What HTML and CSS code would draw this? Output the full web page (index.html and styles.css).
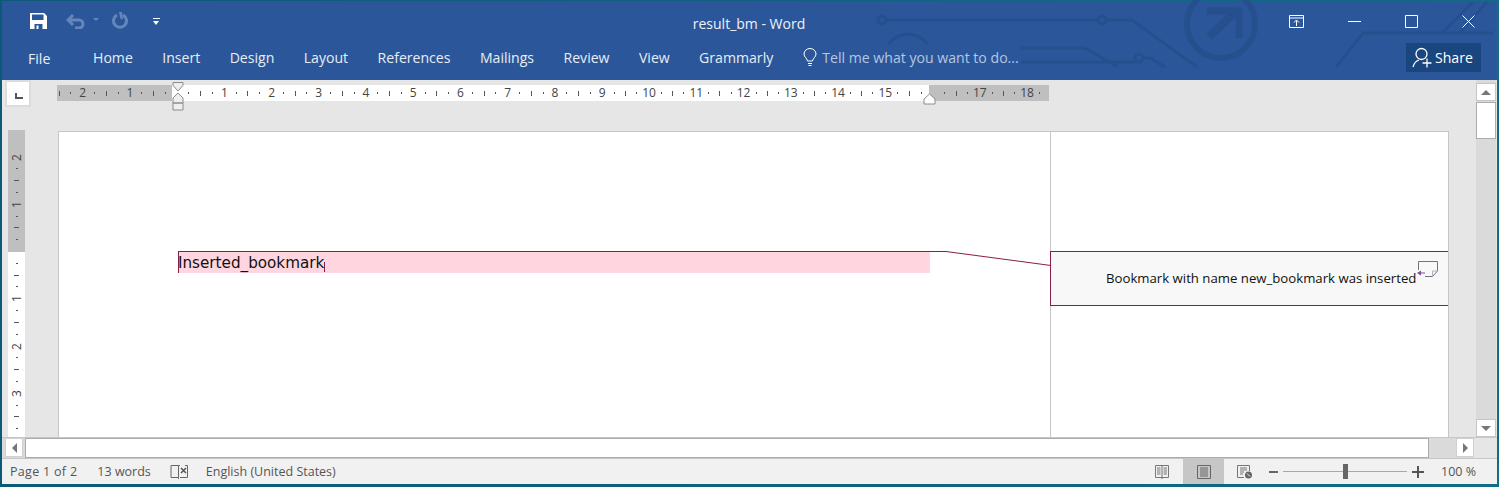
FILE: index.html
```html
<!DOCTYPE html>
<html lang="en">
<head>
  <meta charset="UTF-8">
  <title>result_bm - Word</title>
  <link rel="stylesheet" href="styles.css">
</head>
<body>
<div class="window">

  <header class="ribbon">
    <svg class="circuit" width="640" height="79" viewBox="860 0 640 79">
      <g fill="none" stroke="#264f8e" stroke-width="3">
        <circle cx="882" cy="20" r="4"/>
        <path d="M886 20H1098M1106 20H1132L1197 67"/>
        <circle cx="1102" cy="20" r="4"/>
        <path d="M1021 48H1085L1118 67"/>
        <path d="M1021 62H1135"/>
        <circle cx="1139" cy="58" r="4"/>
        <path d="M1143 58H1150L1165 67"/>
        <path d="M888 45A24 24 0 0 1 928 45"/>
        <path d="M1336 67L1363 33H1493"/>
        <path d="M1442 33L1473 2M1460 33L1487 2"/>
        <circle cx="1221" cy="24" r="34" stroke-width="6"/>
        <path d="M1209 37L1234 13" stroke-width="8"/>
        <path d="M1207 11H1239V38" stroke-width="7"/>
      </g>
    </svg>

    <div class="titlerow">
      <div class="qat">
        <svg class="qat-save" width="17" height="17" viewBox="0 0 17 17">
          <path d="M0 1H14L17 4V17H0Z" fill="#fff"/>
          <path d="M2 2.500H13.500V8H2Z" fill="#2b579a"/>
          <path d="M4.500 12H12.500V17H4.500Z" fill="#2b579a"/>
          <path d="M6.500 13.500H8.500V17H6.500Z" fill="#fff"/>
        </svg>
        <svg class="qat-undo" width="20" height="17" viewBox="0 0 20 17">
          <path d="M7 3L2 8L7 13M2 8H13A4 4 0 0 1 13 16H9" fill="none" stroke="#6486ba" stroke-width="3"/>
        </svg>
        <span class="caret dim"></span>
        <svg class="qat-redo" width="17" height="17" viewBox="0 0 17 17">
          <path d="M11 3A6.500 6.500 0 1 1 5 3" fill="none" stroke="#6486ba" stroke-width="3"/>
          <path d="M7 0H10L11 7H8.500Z" fill="#6486ba"/>
        </svg>
        <span class="qat-more"></span>
      </div>
      <div class="doc-title">result_bm - Word</div>
      <div class="winctl">
        <svg width="15" height="13" viewBox="0 0 15 13">
          <path d="M.5.500H14.500V12.500H.5ZM1 3H14M7.500 11V5.500M5 7.500L7.500 5L10 7.500" fill="none" stroke="#fff"/>
        </svg>
        <svg width="13" height="13" viewBox="0 0 13 13"><path d="M0 6.500H13" stroke="#fff"/></svg>
        <svg width="13" height="13" viewBox="0 0 13 13"><path d="M.5.500H12.500V12.500H.5Z" fill="none" stroke="#fff"/></svg>
        <svg width="13" height="13" viewBox="0 0 13 13"><path d="M.5.500L12.500 12.500M12.500.500L.5 12.500" stroke="#fff"/></svg>
      </div>
    </div>

    <div class="tabrow">
      <span class="tab-file">File</span>
      <nav class="tabs">
        <span>Home</span>
        <span>Insert</span>
        <span>Design</span>
        <span>Layout</span>
        <span>References</span>
        <span>Mailings</span>
        <span>Review</span>
        <span>View</span>
        <span>Grammarly</span>
      </nav>
      <div class="tellme">
        <svg width="14" height="19" viewBox="0 0 14 19">
          <path d="M4.500 13C4 10 1 9 1 6A6 5.500 0 0 1 13 6C13 9 10 10 9.500 13ZM5 15.500H9M5.500 17.500H8.500" fill="none" stroke="#fff"/>
        </svg>
        <span>Tell me what you want to do...</span>
      </div>
      <div class="share">
        <svg width="22" height="23" viewBox="0 0 22 23">
          <circle cx="9.500" cy="8" r="5.500" fill="none" stroke="#fff" stroke-width="1.300"/>
          <path d="M1 21C2 17 4 15 7 14M15 12.500V21.500M10.500 17H19.500" fill="none" stroke="#fff" stroke-width="1.300"/>
        </svg>
        <span>Share</span>
      </div>
    </div>
  </header>

  <div class="workspace">
    <div class="doc-column">

      <div class="hruler-row">
        <div class="tab-stop"><span class="tab-stop-glyph"></span></div>
        <div class="hruler">
          <div class="hruler-marks">
            <div class="cm"><i class="t"></i><i class="d"></i><b>2</b><i class="d"></i></div>
            <div class="cm"><i class="t"></i><i class="d"></i><b>1</b><i class="d"></i></div>
            <div class="cm"><i class="t"></i><i class="d"></i><b></b><i class="d"></i></div>
            <div class="cm"><i class="t"></i><i class="d"></i><b>1</b><i class="d"></i></div>
            <div class="cm"><i class="t"></i><i class="d"></i><b>2</b><i class="d"></i></div>
            <div class="cm"><i class="t"></i><i class="d"></i><b>3</b><i class="d"></i></div>
            <div class="cm"><i class="t"></i><i class="d"></i><b>4</b><i class="d"></i></div>
            <div class="cm"><i class="t"></i><i class="d"></i><b>5</b><i class="d"></i></div>
            <div class="cm"><i class="t"></i><i class="d"></i><b>6</b><i class="d"></i></div>
            <div class="cm"><i class="t"></i><i class="d"></i><b>7</b><i class="d"></i></div>
            <div class="cm"><i class="t"></i><i class="d"></i><b>8</b><i class="d"></i></div>
            <div class="cm"><i class="t"></i><i class="d"></i><b>9</b><i class="d"></i></div>
            <div class="cm"><i class="t"></i><i class="d"></i><b>10</b><i class="d"></i></div>
            <div class="cm"><i class="t"></i><i class="d"></i><b>11</b><i class="d"></i></div>
            <div class="cm"><i class="t"></i><i class="d"></i><b>12</b><i class="d"></i></div>
            <div class="cm"><i class="t"></i><i class="d"></i><b>13</b><i class="d"></i></div>
            <div class="cm"><i class="t"></i><i class="d"></i><b>14</b><i class="d"></i></div>
            <div class="cm"><i class="t"></i><i class="d"></i><b>15</b><i class="d"></i></div>
            <div class="cm"><i class="t"></i><i class="d"></i><b></b><i class="d"></i></div>
            <div class="cm"><i class="t"></i><i class="d"></i><b>17</b><i class="d"></i></div>
            <div class="cm"><i class="t"></i><i class="d"></i><b>18</b><i class="d"></i></div>
          </div>
          <!-- indent markers -->
          <svg class="indent-left" width="12" height="30" viewBox="0 0 12 30">
            <path d="M1 .5H11V3.500L6 9L1 3.500Z M6 11L11 16V21H1V16Z M1 21H11V28H1Z" fill="#eee" stroke="#8c8c8c"/>
          </svg>
          <svg class="indent-right" width="13" height="12" viewBox="0 0 13 12">
            <path d="M6.500 1L12 6V11H1V6Z" fill="#fff" stroke="#8c8c8c"/>
          </svg>
        </div>
      </div>

      <div class="doc-row">
        <div class="vruler">
          <div class="vruler-marks">
            <div class="vcm"><i></i><i></i><b>2</b><i class="d"></i></div>
            <div class="vcm"><i class="t"></i><i class="d"></i><b>1</b><i class="d"></i></div>
            <div class="vcm"><i class="t"></i><i class="d"></i><b></b><i class="d"></i></div>
            <div class="vcm"><i class="t"></i><i class="d"></i><b>1</b><i class="d"></i></div>
            <div class="vcm"><i class="t"></i><i class="d"></i><b>2</b><i class="d"></i></div>
            <div class="vcm"><i class="t"></i><i class="d"></i><b>3</b><i class="d"></i></div>
            <div class="vcm"><i class="t"></i><i class="d"></i></div>
          </div>
        </div>

        <div class="page">
          <div class="page-body">
            <div class="bookmark-line">
              <span class="bookmark-text">Inserted_bookmark</span>
              <span class="bookmark-end"></span>
            </div>
          </div>
          <div class="page-markup">
            <div class="balloon">
              <span>Bookmark with name new_bookmark was inserted</span>
              <svg class="balloon-icon" width="21" height="17" viewBox="0 0 21 17">
                <path d="M1.500 9V.5H20.500V10L15.500 15.500H8" fill="none" stroke="#77717f"/>
                <path d="M15.500 15.500V10H20.500" fill="none" stroke="#b5b0bb"/>
                <path d="M0 12L4 9.500V11.500H8V12.500H4V14.500Z" fill="#7b4fa3"/>
              </svg>
            </div>
          </div>
          <!-- connector from bookmark to balloon -->
          <svg class="connector" width="875" height="16" viewBox="0 0 875 16">
            <path d="M0 .5H768L873 14.500" fill="none" stroke="#8a1c4a"/>
          </svg>
        </div>
      </div>
    </div>

    <div class="vscroll">
      <div class="sbtn"><span class="arrow-up"></span></div>
      <div class="vthumb"></div>
      <div class="vtrack"></div>
      <div class="sbtn"><span class="arrow-down"></span></div>
    </div>
  </div>

  <div class="hscroll">
    <div class="sbtn-h"><span class="arrow-left"></span></div>
    <div class="hthumb"></div>
    <div class="htrack"></div>
    <div class="sbtn-h"><span class="arrow-right"></span></div>
    <div class="corner"></div>
  </div>

  <footer class="status">
    <span class="st-page">Page 1 of 2</span>
    <span class="st-words">13 words</span>
    <svg class="st-proof" width="18" height="16" viewBox="0 0 18 16">
      <path d="M8.500 1.500H1V13.500H8.500V15M8.500 1.500V13.500M8.500 1.500H10M15 1.500H17.500V13.500H10" fill="none" stroke="#666"/>
      <path d="M11 4L16 9M16 4L11 9" stroke="#555" stroke-width="1.500"/>
    </svg>
    <span class="st-lang">English (United States)</span>
    <div class="st-right">
      <svg class="st-read" width="14" height="14" viewBox="0 0 14 14">
        <path d="M.5.500H13.500V12.500H.5ZM7 .5V14M2 3H5.500M2 5H5.500M2 7H5.500M2 9H5.500M8.500 3H12M8.500 5H12M8.500 7H12M8.500 9H12" fill="none" stroke="#777"/>
      </svg>
      <div class="st-print">
        <svg width="14" height="14" viewBox="0 0 14 14">
          <path d="M.5.500H13.500V13.500H.5ZM3 3H11M3 5H11M3 7H11M3 9H11M3 11H11" fill="none" stroke="#666"/>
        </svg>
      </div>
      <svg class="st-web" width="16" height="14" viewBox="0 0 16 14">
        <path d="M7 12.500H.5V.5H12.500V6M3 3H10M3 5H10M3 7H7M3 9H6" fill="none" stroke="#777"/>
        <circle cx="11.500" cy="10" r="3.500" fill="#666"/>
        <path d="M10 8.500L13 11.500" stroke="#f1f1f1"/>
      </svg>
      <div class="zoom-bar">
        <span class="zoom-minus"></span>
        <div class="zoom-slider"><span class="zoom-thumb"></span></div>
        <span class="zoom-plus"></span>
      </div>
      <span class="st-zoom">100 %</span>
    </div>
  </footer>
</div>
</body>
</html>
```

FILE: styles.css
```css
* {
  box-sizing: border-box;
}
html, body {
  margin: 0;
  height: 100%;
}
body {
  font-family: "Open Sans", Arial, sans-serif;
  overflow: hidden;
}
.window {
  width: 1499px;
  height: 487px;
  padding: 1px 2px 3px 2px;
  background: linear-gradient(90deg, #0b5a78, #10617f 50%, #0f6d84);
  display: flex;
  flex-direction: column;
}

/* ribbon */
.ribbon {
  position: relative;
  height: 79px;
  background: #2b579a;
  color: #fff;
  flex: none;
}
.circuit {
  position: absolute;
  left: 858px;
  top: -1px;
}
.titlerow {
  position: relative;
  height: 42px;
  display: flex;
  align-items: center;
}
.qat {
  width: 300px;
  display: flex;
  align-items: center;
  padding-left: 28px;
  padding-bottom: 3px;
}
.qat-undo {
  margin-left: 19px;
}
.caret {
  width: 0;
  height: 0;
  border: 3px solid transparent;
  border-top: 3px solid #6486ba;
  border-bottom: 0;
  margin-left: 7px;
  margin-bottom: 2px;
}
.qat-redo {
  margin-left: 13px;
}
.qat-more {
  width: 7px;
  height: 6px;
  margin-left: 24px;
  border-top: 1px solid #fff;
  position: relative;
}
.qat-more::after {
  content: "";
  position: absolute;
  left: 0;
  top: 2px;
  border: 3.500px solid transparent;
  border-top: 4px solid #fff;
  border-bottom: 0;
}
.doc-title {
  width: 894px;
  text-align: center;
  font-size: 14px;
  padding-top: 3px;
  color: #eef2f8;
}
.winctl {
  flex: 1;
  display: flex;
  align-items: center;
  gap: 44px;
  padding-left: 93px;
  padding-bottom: 2px;
}
.tabrow {
  position: relative;
  height: 37px;
  display: flex;
  align-items: flex-start;
  padding-left: 26px;
  font-size: 14.100px;
  color: #e8edf5;
}
.tab-file {
  margin-top: 6px;
  width: 65px;
}
.tabs {
  display: flex;
  gap: 29.400px;
  margin-top: 5px;
}
.tellme {
  display: flex;
  align-items: center;
  gap: 5px;
  height: 24px;
  margin-top: 2px;
  margin-left: 30px;
  padding-right: 1px;
  background: #2b579a;
  color: #b4c6e2;
}
.share {
  margin-left: auto;
  margin-right: 16px;
  width: 75px;
  height: 29px;
  background: #19467f;
  color: #fff;
  display: flex;
  align-items: center;
  gap: 1px;
  padding-left: 6px;
}

/* work area */
.workspace {
  flex: 1;
  min-height: 0;
  display: flex;
  background: #e6e6e6;
}
.doc-column {
  flex: 1;
  min-width: 0;
  display: flex;
  flex-direction: column;
}
.hruler-row {
  height: 50px;
  position: relative;
  display: flex;
  flex: none;
}
.tab-stop {
  width: 26px;
  height: 27px;
  margin: 0 0 0 3px;
  background: #fff;
  border: 2px solid #dcdcdc;
  position: relative;
}
.tab-stop-glyph {
  position: absolute;
  left: 8px;
  top: 11px;
  width: 8px;
  height: 6px;
  border-left: 2px solid #555;
  border-bottom: 2px solid #555;
}
.hruler {
  position: relative;
  width: 992px;
  height: 16px;
  margin: 5px 0 0 26px;
  background: linear-gradient(90deg, #bfbfbf 115px, #fff 115px, #fff 872px, #bfbfbf 872px);
}
.hruler-marks {
  display: flex;
  margin-left: -3.900px;
  height: 16px;
}
.cm {
  flex: none;
  width: 47.240px;
  display: grid;
  grid-template-columns: repeat(4, 1fr);
  align-items: center;
  justify-items: center;
  font-size: 12px;
  color: #444;
}
.cm b, .vcm b {
  font-weight: 400;
  line-height: 16px;
  white-space: nowrap;
}
.cm .t {
  width: 1px;
  height: 5px;
  background: #555;
}
.cm .d {
  width: 1px;
  height: 2px;
  background: #555;
}
.indent-left {
  position: absolute;
  left: 115px;
  top: -3px;
}
.indent-right {
  position: absolute;
  left: 866px;
  top: 8px;
}
.doc-row {
  flex: 1;
  min-height: 0;
  display: flex;
}
.vruler {
  width: 17px;
  margin-left: 6px;
  background: linear-gradient(180deg, #bfbfbf 122px, #fff 122px);
  overflow: hidden;
  flex: none;
}
.vruler-marks {
  margin-top: -2.500px;
  display: flex;
  flex-direction: column;
}
.vcm {
  flex: none;
  height: 47.240px;
  display: grid;
  grid-template-rows: repeat(4, 1fr);
  align-items: center;
  justify-items: center;
  font-size: 12px;
  color: #444;
}
.vcm b {
  writing-mode: vertical-rl;
  transform: rotate(180deg);
  line-height: 17px;
}
.vcm .t {
  width: 5px;
  height: 1px;
  background: #555;
}
.vcm .d {
  width: 2px;
  height: 1px;
  background: #555;
}
.page {
  position: relative;
  margin: 1px 0 0 33px;
  width: 1391px;
  background: #fff;
  border: 1px solid #c6c6c6;
  border-bottom: 0;
  display: flex;
}
.page-body {
  width: 992px;
  padding: 119px 0 0 119px;
  flex: none;
  border-right: 1px solid #c6c6c6;
}
.bookmark-line {
  position: relative;
  width: 752px;
  height: 22px;
  background: #ffd6e0;
  border-left: 1px solid #8a1c4a;
  font-family: "DejaVu Sans", sans-serif;
  font-size: 15.200px;
  line-height: 24px;
  color: #111;
}
.bookmark-text {
  margin-left: -1px;
}
.bookmark-end {
  position: absolute;
  left: 145px;
  top: 11px;
  width: 1px;
  height: 10px;
  background: #8a1c4a;
}
.page-markup {
  flex: 1;
  margin-left: -1px;
  padding-top: 119px;
}
.balloon {
  position: relative;
  height: 55px;
  background: #f8f8f8;
  border: 1px solid #8a1c4a;
  border-right: 0;
  padding: 17px 0 0 55px;
  font-size: 13.200px;
  line-height: 18px;
  color: #111;
}
.balloon-icon {
  position: absolute;
  left: 366px;
  top: 9px;
}
.connector {
  position: absolute;
  left: 119px;
  top: 119px;
}

/* scroll bars */
.vscroll {
  width: 20px;
  flex: none;
  margin-right: 1px;
  background: #dadada;
  display: flex;
  flex-direction: column;
  padding-top: 3px;
}
.sbtn {
  height: 18px;
  background: #fff;
  border: 1px solid #c6c6c6;
  display: flex;
  align-items: center;
  justify-content: center;
  flex: none;
}
.vthumb {
  height: 37px;
  margin-top: 1px;
  background: #fff;
  border: 1px solid #ababab;
  flex: none;
}
.vtrack {
  flex: 1;
}
.arrow-up {
  border: 5px solid transparent;
  border-bottom: 5px solid #777;
  border-top: 0;
}
.arrow-down {
  border: 5px solid transparent;
  border-top: 5px solid #777;
  border-bottom: 0;
}
.hscroll {
  height: 21px;
  flex: none;
  display: flex;
  background: #dadada;
  padding-left: 3px;
  padding-right: 0;
  border-top: 1px solid #c6c6c6;
}
.sbtn-h {
  width: 18px;
  height: 19px;
  background: #fff;
  border: 1px solid #d0d0d0;
  display: flex;
  align-items: center;
  justify-content: center;
  flex: none;
}
.hthumb {
  width: 1404px;
  margin-left: 2px;
  background: #fff;
  border: 1px solid #ababab;
  flex: none;
}
.htrack {
  width: 27px;
  flex: none;
}
.corner {
  flex: 1;
  background: #e6e6e6;
}
.arrow-left {
  border: 5px solid transparent;
  border-right: 5px solid #777;
  border-left: 0;
}
.arrow-right {
  border: 5px solid transparent;
  border-left: 5px solid #777;
  border-right: 0;
}

/* status bar */
.status {
  height: 26px;
  flex: none;
  background: #f1f1f1;
  border-top: 1px solid #c6c6c6;
  display: flex;
  align-items: center;
  font-size: 12.500px;
  color: #555;
  padding-left: 8px;
}
.st-page {
  letter-spacing: .3px;
}
.st-words {
  margin-left: 20px;
}
.st-proof {
  margin-left: 19px;
}
.st-lang {
  margin-left: 18px;
}
.st-right {
  margin-left: auto;
  display: flex;
  align-items: center;
  height: 100%;
}
.st-print {
  width: 41px;
  height: 100%;
  margin-left: 14px;
  background: #c6c6c6;
  display: flex;
  align-items: center;
  justify-content: center;
}
.st-web {
  margin-left: 13px;
}
.zoom-bar {
  display: flex;
  align-items: center;
  margin-left: 16px;
}
.zoom-minus {
  width: 9px;
  height: 2px;
  background: #666;
}
.zoom-slider {
  position: relative;
  width: 124px;
  height: 1px;
  margin: 0 5px;
  background: #a8a8a8;
}
.zoom-thumb {
  position: absolute;
  left: 60px;
  top: -7px;
  width: 5px;
  height: 15px;
  background: #666;
}
.zoom-plus {
  position: relative;
  width: 12px;
  height: 2px;
  background: #555;
}
.zoom-plus::after {
  content: "";
  position: absolute;
  left: 5px;
  top: -5px;
  width: 2px;
  height: 12px;
  background: #555;
}
.st-zoom {
  width: 73px;
  padding-left: 17px;
}
```
